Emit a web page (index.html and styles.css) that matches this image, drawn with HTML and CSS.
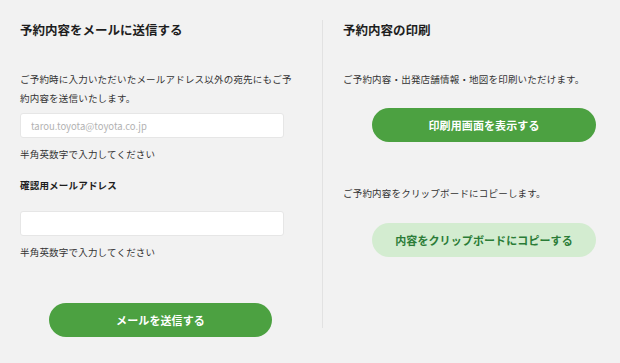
FILE: index.html
```html
<!DOCTYPE html>
<html lang="ja">
<head>
    <meta charset="UTF-8" />
    <meta name="viewport" content="width=device-width, initial-scale=1.0"/>
    <title>予約内容</title>
    <link rel="stylesheet" href="styles.css">
</head>
<body>

<div class="container">

    <!-- Send by mail -->
    <div class="col col-mail">
        <h2 class="col-title">予約内容をメールに送信する</h2>
        <p class="lead">ご予約時に入力いただいたメールアドレス以外の宛先にもご予約内容を送信いたします。</p>
        <input type="text" class="text-input" placeholder="tarou.toyota@toyota.co.jp" />
        <p class="hint">半角英数字で入力してください</p>
        <p class="label">確認用メールアドレス</p>
        <input type="text" class="text-input input-confirm" />
        <p class="hint">半角英数字で入力してください</p>
        <button class="btn btn-primary btn-send">メールを送信する</button>
    </div>

    <!-- Print / copy -->
    <div class="col col-print">
        <h2 class="col-title">予約内容の印刷</h2>
        <p class="lead">ご予約内容・出発店舗情報・地図を印刷いただけます。</p>
        <button class="btn btn-primary btn-side">印刷用画面を表示する</button>
        <p class="lead lead-copy">ご予約内容をクリップボードにコピーします。</p>
        <button class="btn btn-light btn-side">内容をクリップボードにコピーする</button>
    </div>

</div>

</body>
</html>
```

FILE: styles.css
```css
* {
  box-sizing: border-box;
  margin: 0;
  padding: 0;
  font-family: 'Noto Sans CJK JP', 'Noto Sans', sans-serif;
}

body {
  background: #f2f2f2;
  color: #333;
}

.container {
  display: flex;
  align-items: flex-start;
  padding-top: 20px;
}

.col {
  display: flex;
  flex-direction: column;
  align-items: flex-start;
}

.col-mail {
  width: 322px;
  padding-left: 20px;
}

.col-print {
  flex: 1;
  padding-left: 20px;
  padding-bottom: 71px;
  border-left: 1px solid #e2e2e2;
}

.col-title {
  font-size: 12.5px;
  line-height: 20px;
  font-weight: bold;
  color: #1e1e1e;
  margin-bottom: 29.5px;
}

.lead,
.hint,
.label {
  font-size: 9.5px;
  line-height: 19px;
  letter-spacing: 0.2px;
}

.col-mail .lead {
  width: 280px;
}

.label {
  font-weight: bold;
  color: #1e1e1e;
  margin-top: 12px;
}

.text-input {
  width: 264px;
  height: 25px;
  margin-top: 5.5px;
  padding: 0 10px;
  background: #fff;
  border: 1px solid #e6e6e6;
  border-radius: 3px;
  font-size: 9.5px;
  color: #333;
  outline: none;
}

.text-input::placeholder {
  color: #b2b2b2;
}

.input-confirm {
  margin-top: 15.5px;
}

.hint {
  margin-top: 7px;
}

.btn {
  cursor: pointer;
  border: none;
  border-radius: 17px;
  height: 34px;
  width: 224px;
  font-size: 11px;
  font-weight: bold;
  letter-spacing: 0.1px;
}

.btn-primary {
  background: #4ca141;
  color: #fff;
}

.btn-light {
  background: #d3ecd0;
  color: #2b7c37;
}

.btn-send {
  width: 223px;
  margin-top: 41.5px;
  margin-left: 29px;
}

.btn-side {
  margin-top: 19.5px;
  margin-left: 29px;
}

.lead-copy {
  margin-top: 42px;
}
```
